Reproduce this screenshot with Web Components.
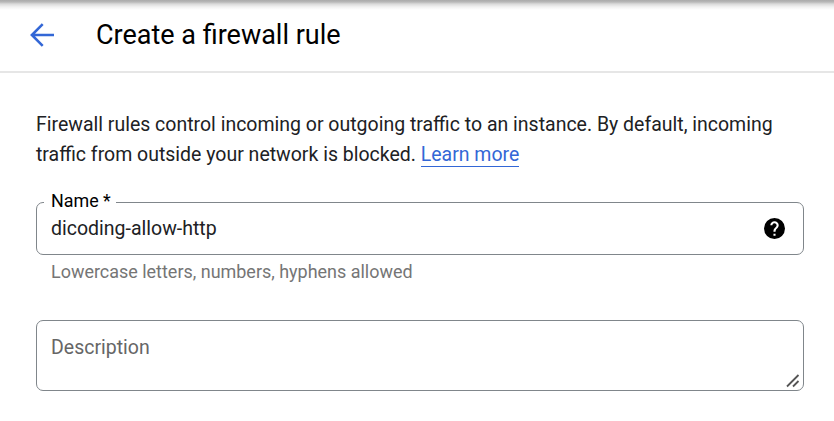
<!DOCTYPE html>
<html lang="en"><head><meta charset="utf-8"><title>Create a firewall rule</title>
<style>html,body{margin:0;height:421px;overflow:hidden;background:#fff}body{font-family:Roboto,sans-serif;color:#202124}</style></head>
<body>
<firewall-page>
<page-header slot="header">Create a firewall rule</page-header>
<intro-text></intro-text>
<text-field label="Name *" hint="Lowercase letters, numbers, hyphens allowed">dicoding-allow-http</text-field>
<text-area>Description</text-area>
</firewall-page>
<script>
const define=(name,html,setup)=>customElements.define(name,class extends HTMLElement{
 constructor(){super();this.attachShadow({mode:'open'}).innerHTML=html}
 connectedCallback(){if(setup)setup(this,this.shadowRoot)}
});
define('firewall-page',`<style>:host{display:block}main{padding:37px 30px 0 36px}</style><slot name="header"></slot><main><slot></slot></main>`);
define('page-header',`<style>
:host{display:flex;box-sizing:border-box;height:73px;align-items:center;border-bottom:2px solid #e6e6e6;padding:0 0 1px 30px;gap:42px;color:#000;background:linear-gradient(#aaa,#b8b8b8 2px,#dadada 4px,#f2f2f2 7px,#fff 10px)}
svg{display:block}span{font-size:27px;line-height:32px;white-space:nowrap}
</style><svg width="24" height="24" viewBox="0 0 24 24" fill="none" stroke="#3367d6" stroke-width="2.6"><path d="M24 12H2M12.7 1.2 1.9 12l10.8 10.8"/></svg><span><slot></slot></span>`);
define('intro-text',`<style>:host{display:block;font-size:19.49px;line-height:30px;white-space:nowrap}a{color:#3367d6;border-bottom:1px solid}div{width:max-content}</style>
<div>Firewall rules control incoming or outgoing traffic to an instance. By default, incoming</div><div>traffic from outside your network is blocked. <a>Learn more</a></div>`);
define('text-field',`<style>
:host{display:block;margin-top:20px}fieldset{box-sizing:border-box;margin:0;height:65px;border:1px solid #80868b;border-radius:7px;padding:0 18px 0 7px;min-width:0}
legend{font-size:17.9px;line-height:22px;padding:0 5px 2px 7px;color:#000}
.row{display:flex;align-items:center;justify-content:space-between;padding-left:7px;height:28px;font-size:19.5px}
svg{display:block}p{margin:6px 0 0 15px;font-size:17.97px;line-height:22px;color:#757575}p span{white-space:nowrap}
</style><fieldset><legend></legend><div class="row"><span><slot></slot></span><svg width="21" height="21" viewBox="2 2 20 20"><path d="M12 2a10 10 0 1 0 0 20 10 10 0 0 0 0-20zm1 17h-2v-2h2v2zm2.07-7.75-.9.92C13.45 12.9 13 13.5 13 15h-2v-.5c0-1.1.45-2.1 1.17-2.83l1.24-1.26A2 2 0 1 0 10 9H8a4 4 0 1 1 8 0c0 .88-.36 1.68-.93 2.25z"/></svg></div></fieldset><p><span></span></p>`,
(e,r)=>{r.querySelector('legend').textContent=e.getAttribute('label');r.querySelector('p span').textContent=e.getAttribute('hint')});
define('text-area',`<style>
:host{display:flex;justify-content:space-between;box-sizing:border-box;margin-top:37px;height:71px;border:1px solid #80868b;border-radius:7px;padding:12px 3px 2px 14px;color:#666;font-size:19.5px;line-height:30px}
svg{align-self:flex-end}
</style><span><slot></slot></span><svg width="14" height="14" fill="none" stroke="#555" stroke-width="1.8"><path d="M1 12.5 12.5 1M7 12.5 12.5 7"/></svg>`);
</script></body></html>
